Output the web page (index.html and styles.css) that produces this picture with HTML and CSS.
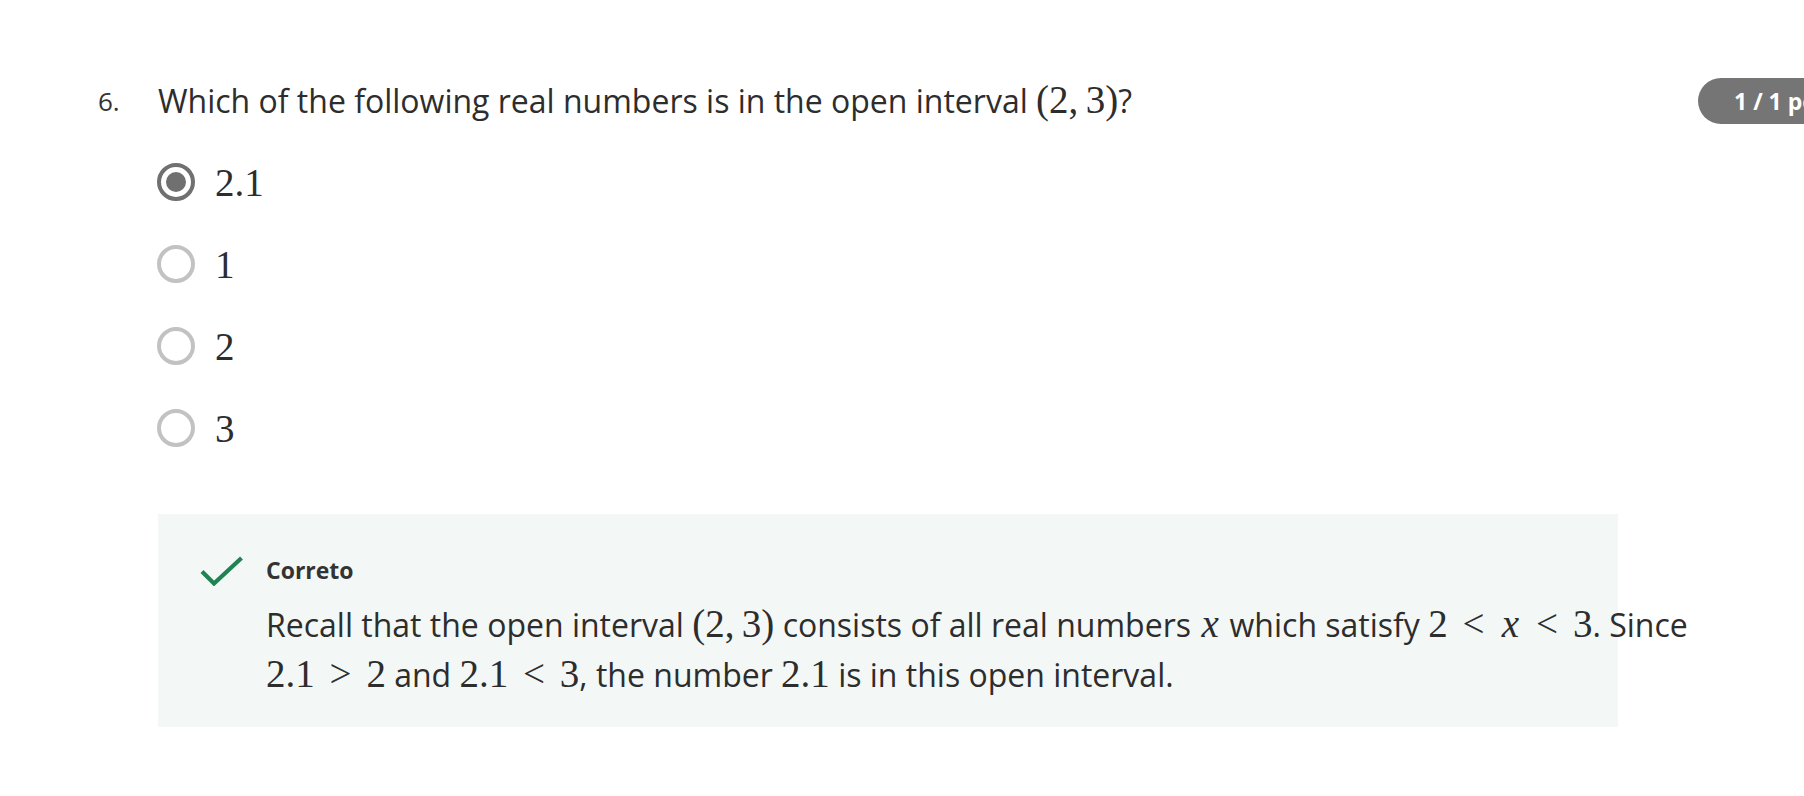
FILE: index.html
```html
<!DOCTYPE html>
<html lang="en">
<head>
<meta charset="utf-8">
<title>Question 6</title>
<link rel="stylesheet" href="styles.css">
</head>
<body>
<main class="page">
  <div class="question-row">
    <div class="q-num">6.</div>
    <div class="q-text">Which of the following real numbers is in the open interval <span class="m">(2,<span class="thin"></span>3)</span>?</div>
    <div class="badge">1 / 1 ponto</div>
  </div>

  <div class="options">
    <label class="option">
      <span class="radio checked"><span class="dot"></span></span>
      <span class="m opt-m">2.1</span>
    </label>
    <label class="option">
      <span class="radio"></span>
      <span class="m opt-m">1</span>
    </label>
    <label class="option">
      <span class="radio"></span>
      <span class="m opt-m">2</span>
    </label>
    <label class="option">
      <span class="radio"></span>
      <span class="m opt-m">3</span>
    </label>
  </div>

  <section class="feedback">
    <svg class="check" width="44" height="30" viewBox="0 0 44 30" aria-hidden="true">
      <path d="M2 15.5 L14 27.5 L41.5 2" fill="none" stroke="#1f8354" stroke-width="4.2"/>
    </svg>
    <div class="fb-body">
      <div class="fb-title">Correto</div>
      <p class="fb-text">Recall that the open interval <span class="m">(2,<span class="thin"></span>3)</span> consists of all real numbers <span class="m"><span class="mi">x</span></span> which satisfy <span class="m">2<span class="rel">&lt;</span><span class="mi">x</span><span class="rel">&lt;</span>3</span>. Since <span class="m">2.1<span class="rel">&gt;</span>2</span> and <span class="m">2.1<span class="rel">&lt;</span>3</span>, the number <span class="m">2.1</span> is in this open interval.</p>
    </div>
  </section>
</main>
</body>
</html>
```

FILE: styles.css
```css
html, body {
  margin: 0;
  padding: 0;
  background: #ffffff;
  overflow: hidden;
}

body {
  font-family: "Open Sans", "Noto Sans", sans-serif;
  color: #2d2d2d;
}

.page {
  padding: 77px 0 0 98px;
}

.question-row {
  display: flex;
  align-items: center;
  width: 1800px;
}

.q-num {
  flex: 0 0 60px;
  font-size: 26px;
  line-height: 46px;
  color: #333;
}

.q-text {
  flex: 0 0 1540px;
  font-size: 32px;
  line-height: 46px;
}

.badge {
  flex: 0 0 auto;
  height: 46px;
  line-height: 46px;
  padding: 0 36px;
  border-radius: 23px;
  background: #757575;
  color: #fff;
  font-weight: 700;
  font-size: 23px;
  white-space: nowrap;
}

.m {
  font-family: "Liberation Serif", "Times New Roman", serif;
  font-size: 39px;
  letter-spacing: 0;
  white-space: nowrap;
}

.mi {
  font-style: italic;
  margin: 0 0.06em;
}

.thin {
  display: inline-block;
  width: 0.19em;
}

.rel {
  margin: 0 0.38em;
}

.options {
  display: flex;
  flex-direction: column;
  gap: 44px;
  margin-top: 39px;
  padding-left: 59px;
}

.option {
  display: flex;
  align-items: center;
  gap: 20px;
  height: 38px;
}

.radio {
  box-sizing: border-box;
  width: 38px;
  height: 38px;
  border-radius: 50%;
  border: 4px solid #c2c2c2;
  display: flex;
  align-items: center;
  justify-content: center;
  flex: 0 0 auto;
}

.radio.checked {
  border-color: #707070;
}

.dot {
  width: 20px;
  height: 20px;
  border-radius: 50%;
  background: #707070;
}

.opt-m {
  font-size: 39px;
  color: #2d2d2d;
}

.feedback {
  box-sizing: border-box;
  width: 1460px;
  margin: 67px 0 0 60px;
  padding: 42px 42px 28px 42px;
  background: #f3f8f6;
  display: flex;
  align-items: flex-start;
  gap: 22px;
}

.check {
  flex: 0 0 auto;
  margin-top: 0;
}

.fb-body {
  flex: 0 0 1460px;
}

.fb-title {
  font-weight: 700;
  font-size: 23px;
  line-height: 28px;
  color: #333;
}

.fb-text {
  margin: 15px 0 0 0;
  font-size: 32px;
  line-height: 49px;
}
```
